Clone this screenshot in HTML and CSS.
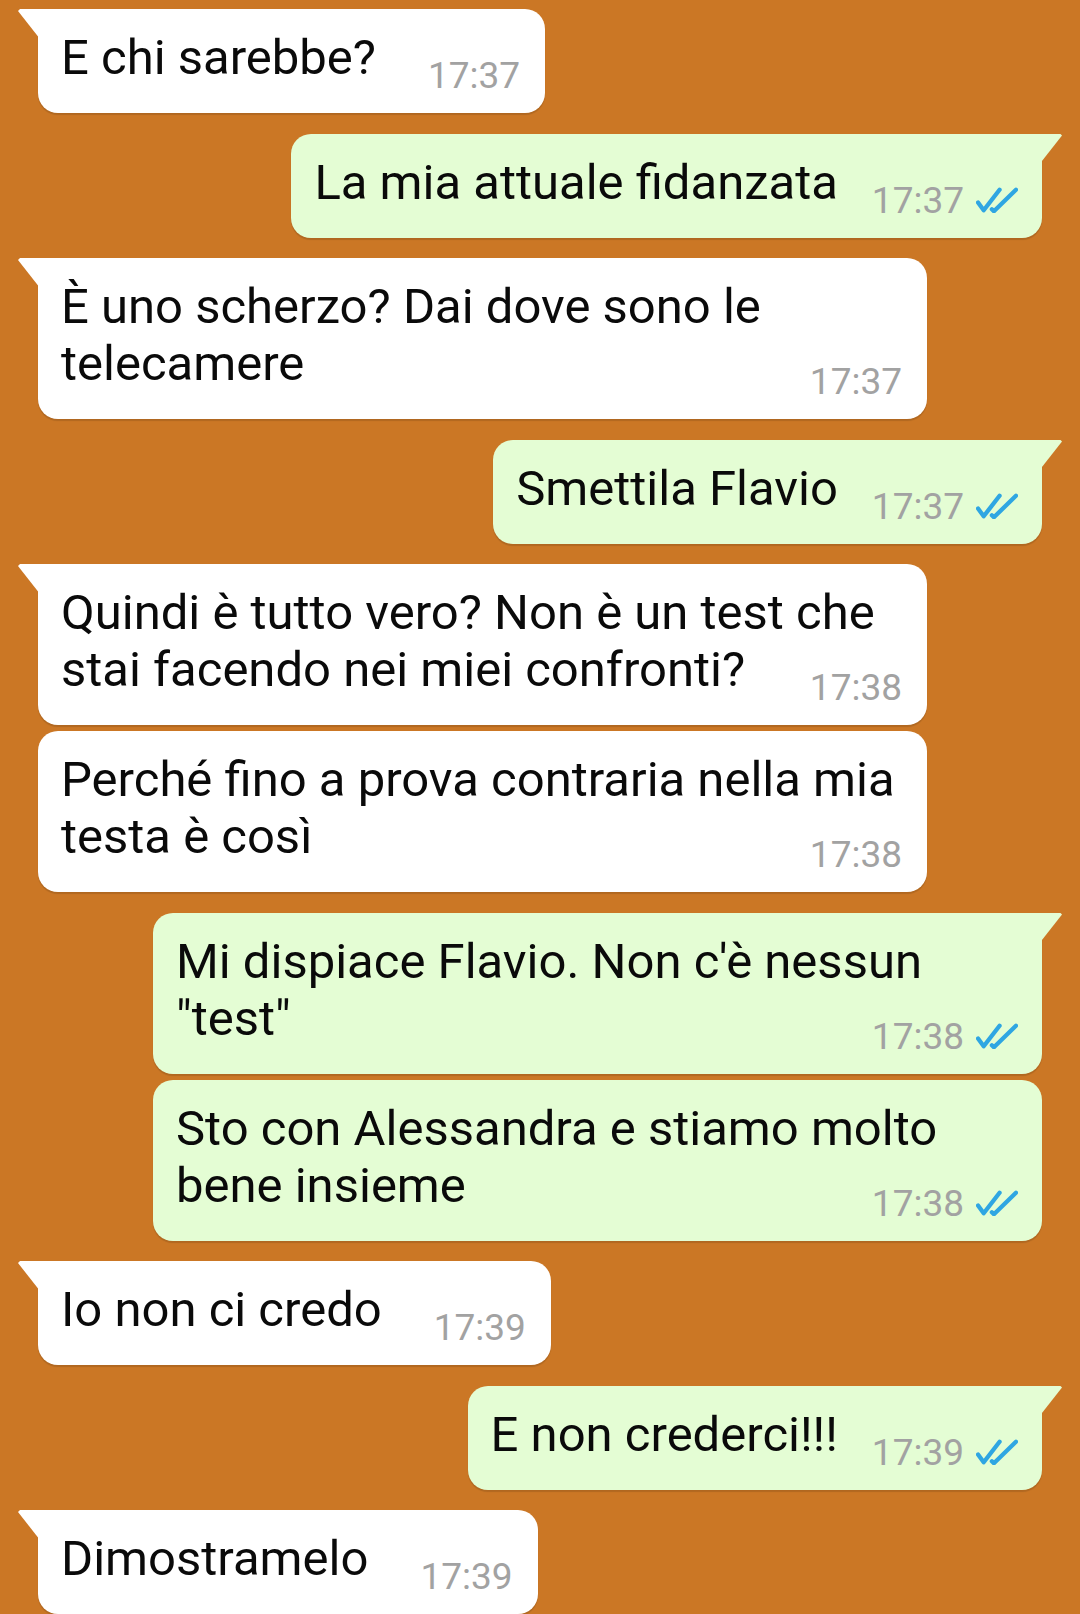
FILE: index.html
```html
<!DOCTYPE html>
<html lang="it">
<head>
    <meta charset="UTF-8">
    <meta name="viewport" content="width=device-width, initial-scale=1.0">
    <title>Chat</title>
    <link rel="stylesheet" href="styles.css">
</head>
<body>
    <div class="chat">
        <div class="msg in tail">
            <div class="bubble"><span class="text">E chi sarebbe?</span><span class="meta">17:37</span></div>
        </div>
        <div class="msg out tail">
            <div class="bubble"><span class="text">La mia attuale fidanzata</span><span class="meta">17:37<svg class="ticks" viewBox="0 0 41 25"><path d="M2 15 L7.5 22.5 L23 2.5 M15.5 21.5 L17.5 23.5 L39 2.5"/></svg></span></div>
        </div>
        <div class="msg in tail">
            <div class="bubble"><span class="text">È uno scherzo? Dai dove sono le telecamere</span><span class="meta">17:37</span></div>
        </div>
        <div class="msg out tail">
            <div class="bubble"><span class="text">Smettila Flavio</span><span class="meta">17:37<svg class="ticks" viewBox="0 0 41 25"><path d="M2 15 L7.5 22.5 L23 2.5 M15.5 21.5 L17.5 23.5 L39 2.5"/></svg></span></div>
        </div>
        <div class="msg in tail">
            <div class="bubble"><span class="text">Quindi è tutto vero? Non è un test che stai facendo nei miei confronti?</span><span class="meta">17:38</span></div>
        </div>
        <div class="msg in cont">
            <div class="bubble"><span class="text">Perché fino a prova contraria nella mia testa è così</span><span class="meta">17:38</span></div>
        </div>
        <div class="msg out tail">
            <div class="bubble"><span class="text">Mi dispiace Flavio. Non c'è nessun "test"</span><span class="meta">17:38<svg class="ticks" viewBox="0 0 41 25"><path d="M2 15 L7.5 22.5 L23 2.5 M15.5 21.5 L17.5 23.5 L39 2.5"/></svg></span></div>
        </div>
        <div class="msg out cont">
            <div class="bubble"><span class="text">Sto con Alessandra e stiamo molto bene insieme</span><span class="meta">17:38<svg class="ticks" viewBox="0 0 41 25"><path d="M2 15 L7.5 22.5 L23 2.5 M15.5 21.5 L17.5 23.5 L39 2.5"/></svg></span></div>
        </div>
        <div class="msg in tail">
            <div class="bubble"><span class="text">Io non ci credo</span><span class="meta">17:39</span></div>
        </div>
        <div class="msg out tail">
            <div class="bubble"><span class="text">E non crederci!!!</span><span class="meta">17:39<svg class="ticks" viewBox="0 0 41 25"><path d="M2 15 L7.5 22.5 L23 2.5 M15.5 21.5 L17.5 23.5 L39 2.5"/></svg></span></div>
        </div>
        <div class="msg in tail">
            <div class="bubble"><span class="text">Dimostramelo</span><span class="meta">17:39</span></div>
        </div>
    </div>
</body>
</html>
```

FILE: styles.css
```css
:root {
    --chat-bg: #cb7725;
    --in-bg: #ffffff;
    --out-bg: #e4fdd4;
    --time: #a2a2a2;
    --tick: #2fa6e2;
}

html, body {
    margin: 0; padding: 0;
    height: 100%;
    overflow: hidden;
    background-color: var(--chat-bg);
}

.chat {
    display: flex; flex-direction: column;
    padding: 9px 38px 0;
    font-family: Roboto, 'Noto Sans', sans-serif;
}

.msg { display: flex; margin-top: 20.5px; }
.msg:first-child { margin-top: 0; }
.msg.cont { margin-top: 6px; }
.msg.out { justify-content: flex-end; }

.bubble {
    position: relative;
    max-width: 889px;
    box-sizing: border-box;
    padding: 20px 25px 27px 23px;
    border-radius: 20px;
    font-size: 49px; line-height: 57px;
    color: #0a0a0a;
    box-shadow: 0 2px 1px rgba(0, 0, 0, 0.13);
}
.in .bubble { background: var(--in-bg); }
.out .bubble { background: var(--out-bg); padding-right: 24px; }

/* tails on the first bubble of a group */
.tail .bubble::before {
    content: "";
    position: absolute; top: 0;
    width: 22px; height: 30px;
}
.in.tail .bubble { border-top-left-radius: 0; }
.in.tail .bubble::before {
    left: -20px;
    background: var(--in-bg);
    clip-path: polygon(0 2px, 2px 0, 100% 0, 100% 100%);
}
.out.tail .bubble { border-top-right-radius: 0; }
.out.tail .bubble::before {
    right: -20px;
    background: var(--out-bg);
    clip-path: polygon(0 0, calc(100% - 2px) 0, 100% 2px, 0 100%);
}

.meta {
    float: right;
    position: relative; top: 18px;
    margin-left: 52px;
    font-size: 37px; line-height: 57px;
    color: var(--time);
    white-space: nowrap;
}
.out .meta { margin-left: 34px; }

.ticks {
    width: 42px; height: 26px;
    margin-left: 12px;
    fill: none;
    stroke: var(--tick);
    stroke-width: 4.2;
    stroke-linecap: round;
    stroke-linejoin: round;
}
```
